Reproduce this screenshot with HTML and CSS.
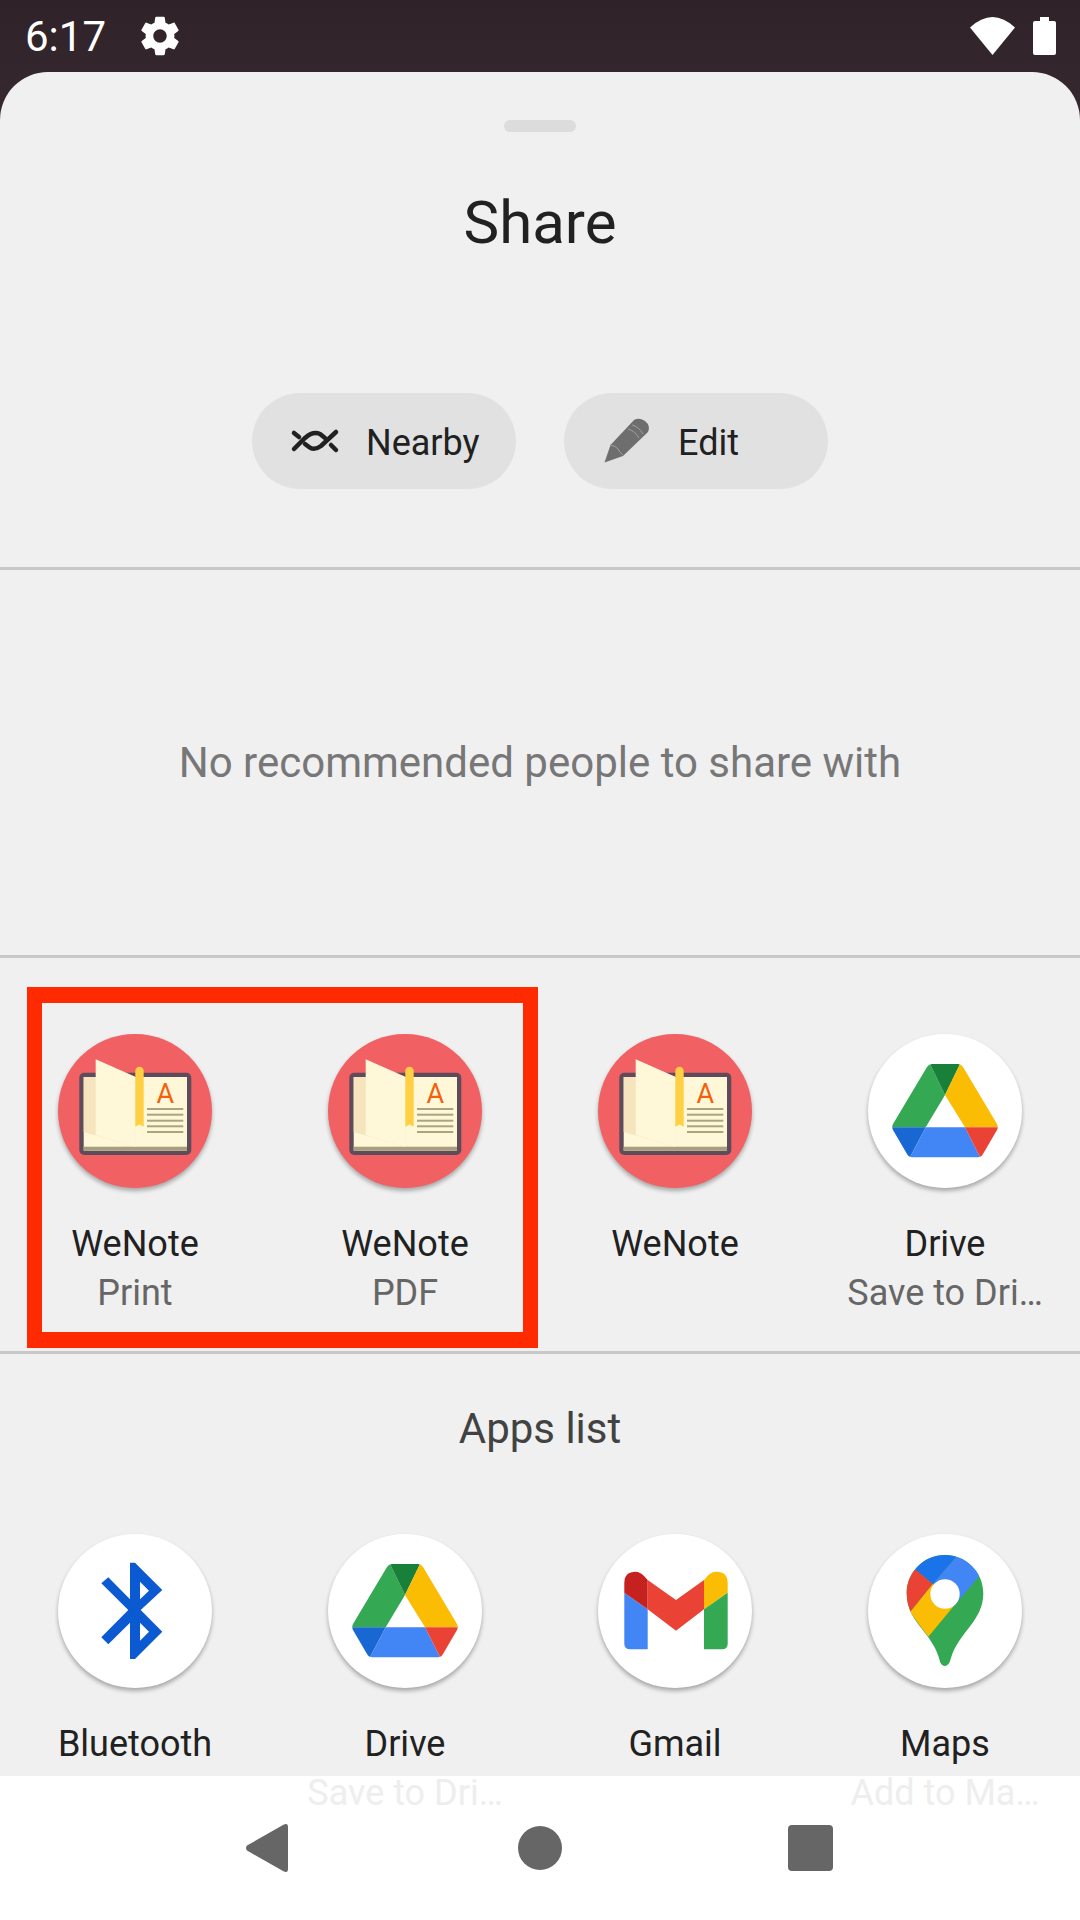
FILE: index.html
```html
<!DOCTYPE html>
<html>

<head>
    <meta charset="utf-8">
    <title>Share</title>
    <link rel="stylesheet" href="styles.css">
</head>

<body>

    <svg class="icon-defs" xmlns="http://www.w3.org/2000/svg">
        <defs>
            <clipPath id="driveClip">
                <path d="M64 30H90Q93 30 95 33L129 90Q130.500 93 129 96L115 120Q113 123.300 110 123.300H44Q41 123.300 39 120L25 96Q23.500 93 25 90L59 33Q61 30 64 30Z" />
            </clipPath>
            <clipPath id="mapsClip">
                <path d="M77 21C98 21 115.300 38 115.300 59.300C115.300 87 91 98 83 124Q81 132 76.700 132Q72.500 132 71 124C67 111 60 103 54 95C46 85 38.700 75 38.700 59.300C38.700 38 56 21 77 21Z" />
            </clipPath>
        </defs>

        <symbol id="wenote" viewBox="0 0 154 154">
            <rect x="21.300" y="38.700" width="112" height="82.300" rx="5" fill="#5f4c5a" />
            <rect x="25.700" y="43" width="103.300" height="73.700" fill="#fff8d8" />
            <rect x="25.700" y="112.700" width="103.300" height="4" fill="#a79f7e" />
            <polygon points="25.700,43 77.300,43 77.300,112.700 25.700,98" fill="#f5e4bd" />
            <polygon points="37.700,25.300 77.300,42.700 77.300,112.700 37.700,101" fill="#fff8d8" />
            <path d="M77.300 37a4.200 4.200 0 0 1 8.400 0V92.700L81.500 90.500 77.300 92.700Z" fill="#ffcf44" />
            <g fill="#aaa580">
                <rect x="89" y="74" width="36.300" height="2" />
                <rect x="89" y="79.700" width="36.300" height="2" />
                <rect x="89" y="85.700" width="36.300" height="2" />
                <rect x="89" y="91.300" width="36.300" height="2" />
                <rect x="89" y="97" width="36.300" height="2" />
            </g>
        </symbol>

        <symbol id="drive" viewBox="0 0 154 154">
            <g clip-path="url(#driveClip)">
                <polygon points="61,28 77,61 57.700,93.300 20,93.300" fill="#34a853" />
                <polygon points="61,28 93,28 77,61" fill="#188038" />
                <polygon points="93,28 134,93.300 97,93.300 77,61" fill="#fbbc04" />
                <polygon points="20,93.300 57.700,93.300 41,125 30,125" fill="#1967d2" />
                <polygon points="57.700,93.300 97,93.300 113,125 41,125" fill="#4285f4" />
                <polygon points="97,93.300 134,93.300 120,125 113,125" fill="#ea4335" />
            </g>
        </symbol>

        <symbol id="bluetooth" viewBox="0 0 154 154">
            <path fill="#0b5ad1" fill-rule="evenodd" d="M72 28.700H77L104.300 56 82.700 76 104.300 97.700 77 125H72V88.700L50.300 110.300 43.300 103.300 70.300 76 43.300 49.300 50.300 43.300 72 65.300ZM82 47.700V65.300L91 56.700ZM82 88.700V106.700L91 97.700Z" />
        </symbol>

        <symbol id="gmail" viewBox="0 0 154 154">
            <path fill="#4285f4" d="M26.300 58.700L49.700 75.300V115.300H32Q26.300 115.300 26.300 109.500Z" />
            <path fill="#c5221f" d="M26.300 58.700V49Q26.300 37.700 38 37.700Q43 37.700 49.700 46V75.300Z" />
            <path fill="#ea4335" d="M49.700 46L78 66 106 46V75.300L78 96.700 49.700 75.300Z" />
            <path fill="#fbbc04" d="M106 46Q112 37.700 118 37.700Q129.700 37.700 129.700 49V58.700L106 75.300Z" />
            <path fill="#34a853" d="M106 75.300L129.700 58.700V109.500Q129.700 115.300 124 115.300H106Z" />
        </symbol>

        <symbol id="maps" viewBox="0 0 154 154">
            <g clip-path="url(#mapsClip)">
                <rect x="20" y="10" width="110" height="130" fill="#34a853" />
                <polygon points="99,10 64.700,50 77,60 85,73 130,20" fill="#4285f4" />
                <polygon points="48,36 20,10 99,10 64.700,50" fill="#1a73e8" />
                <polygon points="30,26 48,36 64.700,50 42,78.300 30,90" fill="#ea4335" />
                <polygon points="64.700,50 77,60 85,73 60.300,102.700 42,78.300" fill="#fbbc04" />
            </g>
            <circle cx="77" cy="60" r="14.700" fill="#fff" />
        </symbol>
    </svg>

    <div class="screen">

        <div class="status">
            <span class="clock">6:17</span>
            <svg class="gear" viewBox="0 0 24 24">
                <path fill="#fff" d="M19.430 12.980c.04-.32.07-.64.07-.98s-.03-.66-.07-.98l2.110-1.650c.19-.15.24-.42.12-.64l-2-3.460c-.12-.22-.39-.3-.61-.22l-2.490 1c-.52-.4-1.080-.73-1.690-.98l-.38-2.650C14.460 2.180 14.250 2 14 2h-4c-.25 0-.46.18-.49.42l-.38 2.650c-.61.25-1.170.59-1.690.98l-2.490-1c-.23-.09-.49 0-.61.22l-2 3.460c-.13.22-.07.49.12.64l2.110 1.650c-.04.32-.07.65-.07.98s.03.66.07.98l-2.110 1.650c-.19.15-.24.42-.12.64l2 3.460c.12.22.39.3.61.22l2.490-1c.52.4 1.080.73 1.690.98l.38 2.650c.03.24.24.42.49.42h4c.25 0 .46-.18.49-.42l.38-2.650c.61-.25 1.170-.59 1.690-.98l2.490 1c.23.09.49 0 .61-.22l2-3.460c.12-.22.07-.49-.12-.64l-2.110-1.650zM12 15.500c-1.930 0-3.500-1.570-3.500-3.500s1.570-3.500 3.500-3.500 3.500 1.570 3.500 3.500-1.570 3.500-3.500 3.500z" />
            </svg>
            <div class="status-right">
                <svg class="wifi" viewBox="0 0 45 38">
                    <path fill="#fff" d="M0 10.500Q22.500 -10.500 45 10.500L22.500 38Z" />
                </svg>
                <svg class="battery" viewBox="0 0 23 38">
                    <path fill="#fff" d="M7 0H16V4H21Q23 4 23 6V36Q23 38 21 38H2Q0 38 0 36V6Q0 4 2 4H7Z" />
                </svg>
            </div>
        </div>

        <div class="sheet">

            <div class="head">
                <div class="handle"></div>
                <div class="title">Share</div>
                <div class="chips">
                    <div class="chip">
                        <svg class="chip-icon nearby" viewBox="0 1 60 40">
                            <g fill="none" stroke="#212121" stroke-width="4.500" stroke-linecap="round">
                                <path d="M9 29L20 18Q28 11 35 14L40 18" />
                                <path d="M20 24L24 27Q29 31 36 26L51 12" />
                                <path d="M9 13L14 17" />
                                <path d="M46 25L51 30" />
                            </g>
                        </svg>
                        <span>Nearby</span>
                    </div>
                    <div class="chip">
                        <svg class="chip-icon" viewBox="2 1 60 60">
                            <path fill="#6e6e6e" d="M9.500 52.500L15.500 35 39 10Q44 7 50 11Q56 16 53 22L28 46Z" />
                            <g fill="none" stroke="#a0a0a0" stroke-width="1">
                                <path d="M33 19Q40 21 44 28" />
                                <path d="M37 15Q44 17 48 24" />
                                <path d="M15.500 35Q21 36 23 39Q24 42 28 45" />
                            </g>
                        </svg>
                        <span>Edit</span>
                    </div>
                </div>
            </div>

            <div class="people">No recommended people to share with</div>

            <div class="targets">
                <div class="app">
                    <svg class="app-icon wenote" viewBox="0 0 154 154"><use href="#wenote" /><text class="wenote-a" x="107.300" y="69.300">A</text></svg>
                    <div class="app-name">WeNote</div>
                    <div class="app-sub">Print</div>
                </div>
                <div class="app">
                    <svg class="app-icon wenote" viewBox="0 0 154 154"><use href="#wenote" /><text class="wenote-a" x="107.300" y="69.300">A</text></svg>
                    <div class="app-name">WeNote</div>
                    <div class="app-sub">PDF</div>
                </div>
                <div class="app">
                    <svg class="app-icon wenote" viewBox="0 0 154 154"><use href="#wenote" /><text class="wenote-a" x="107.300" y="69.300">A</text></svg>
                    <div class="app-name">WeNote</div>
                </div>
                <div class="app">
                    <svg class="app-icon"><use href="#drive" /></svg>
                    <div class="app-name">Drive</div>
                    <div class="app-sub">Save to Dri…</div>
                </div>
                <div class="highlight"></div>
            </div>

            <div class="apps-title">Apps list</div>

            <div class="apps">
                <div class="app">
                    <svg class="app-icon"><use href="#bluetooth" /></svg>
                    <div class="app-name">Bluetooth</div>
                </div>
                <div class="app">
                    <svg class="app-icon"><use href="#drive" /></svg>
                    <div class="app-name">Drive</div>
                    <div class="app-sub">Save to Dri…</div>
                </div>
                <div class="app">
                    <svg class="app-icon"><use href="#gmail" /></svg>
                    <div class="app-name">Gmail</div>
                </div>
                <div class="app">
                    <svg class="app-icon"><use href="#maps" /></svg>
                    <div class="app-name">Maps</div>
                    <div class="app-sub">Add to Ma…</div>
                </div>
            </div>

        </div>

        <div class="nav">
            <svg class="nav-back" viewBox="0 0 42 48">
                <path fill="#666" d="M1 21.500L37 1Q42 -1.500 42 3V45Q42 49.500 37 47L1 26.500Q-1 24 1 21.500Z" />
            </svg>
            <div class="nav-home"></div>
            <div class="nav-recent"></div>
        </div>

    </div>

</body>

</html>
```

FILE: styles.css
```css
body {
    margin: 0;
    background-color: #fff;
    font-family: Roboto, "Noto Sans", sans-serif;
    color: #212121;
}

.icon-defs {
    display: block;
    width: 0;
    height: 0;
}

.screen {
    width: 1080px;
    height: 1920px;
    overflow: hidden;
    background: linear-gradient(#2f2329, #36282f 120px, #fff 120px);
}

/* status bar */

.status {
    height: 72px;
    display: flex;
    align-items: center;
    padding: 0 24px 0 25px;
}

.clock {
    font-size: 42px;
    color: #fff;
}

.gear {
    width: 46px;
    height: 46px;
    margin-left: 31px;
}

.status-right {
    margin-left: auto;
    display: flex;
    align-items: center;
    gap: 18px;
}

.wifi {
    width: 45px;
    height: 38px;
}

.battery {
    width: 23px;
    height: 38px;
}

/* sheet */

.sheet {
    height: 1704px;
    background-color: #f0f0f0;
    border-radius: 48px 48px 0 0;
}

.head {
    height: 495px;
    border-bottom: 3px solid #c8c8c8;
    display: flex;
    flex-direction: column;
    align-items: center;
}

.handle {
    width: 72px;
    height: 12px;
    margin-top: 48px;
    background-color: #dcdcdc;
    border-radius: 6px;
}

.title {
    margin-top: 58px;
    font-size: 60px;
    line-height: 66px;
}

.chips {
    margin-top: 137px;
    display: flex;
    gap: 48px;
}

.chip {
    width: 264px;
    height: 96px;
    box-sizing: border-box;
    padding-left: 33px;
    display: flex;
    align-items: center;
    gap: 21px;
    background-color: #e1e1e1;
    border-radius: 48px;
    font-size: 36px;
}

.chip span {
    padding-top: 3px;
}

.chip-icon {
    width: 60px;
    height: 60px;
}

.chip-icon.nearby {
    height: 40px;
}

.people {
    height: 385px;
    border-bottom: 3px solid #c8c8c8;
    display: flex;
    align-items: center;
    justify-content: center;
    font-size: 42px;
    color: #777;
}

.targets {
    position: relative;
    height: 317px;
    padding-top: 76px;
    border-bottom: 3px solid #c8c8c8;
    display: flex;
}

.highlight {
    position: absolute;
    left: 27px;
    top: 29px;
    width: 511px;
    height: 361px;
    box-sizing: border-box;
    border-style: solid;
    border-color: #ff2a00;
    border-width: 16px 15px;
}

.apps-title {
    margin-top: 50px;
    text-align: center;
    font-size: 42px;
    line-height: 50px;
    color: #424242;
}

.apps {
    margin-top: 80px;
    display: flex;
}

.app {
    width: 270px;
    display: flex;
    flex-direction: column;
    align-items: center;
    font-size: 36px;
    line-height: 49px;
}

.app-icon {
    width: 154px;
    height: 154px;
    margin-bottom: 32px;
    border-radius: 50%;
    background-color: #fff;
    box-shadow: 0 3px 4px rgba(0, 0, 0, 0.3);
}

.app-icon.wenote {
    background-color: #f16063;
}

.wenote-a {
    font-family: Roboto, sans-serif;
    font-size: 27px;
    text-anchor: middle;
    fill: #f4600c;
}

.app-sub {
    color: #666;
}

.apps .app-sub {
    color: #eee;
}

/* nav bar */

.nav {
    height: 144px;
    padding: 0 135px;
    display: grid;
    grid-template-columns: repeat(3, 270px);
    align-items: center;
    justify-items: center;
}

.nav-back {
    width: 42px;
    height: 48px;
    margin-right: 6px;
}

.nav-home {
    width: 44px;
    height: 44px;
    background-color: #666;
    border-radius: 50%;
}

.nav-recent {
    width: 45px;
    height: 46px;
    background-color: #666;
    border-radius: 4px;
}
```
